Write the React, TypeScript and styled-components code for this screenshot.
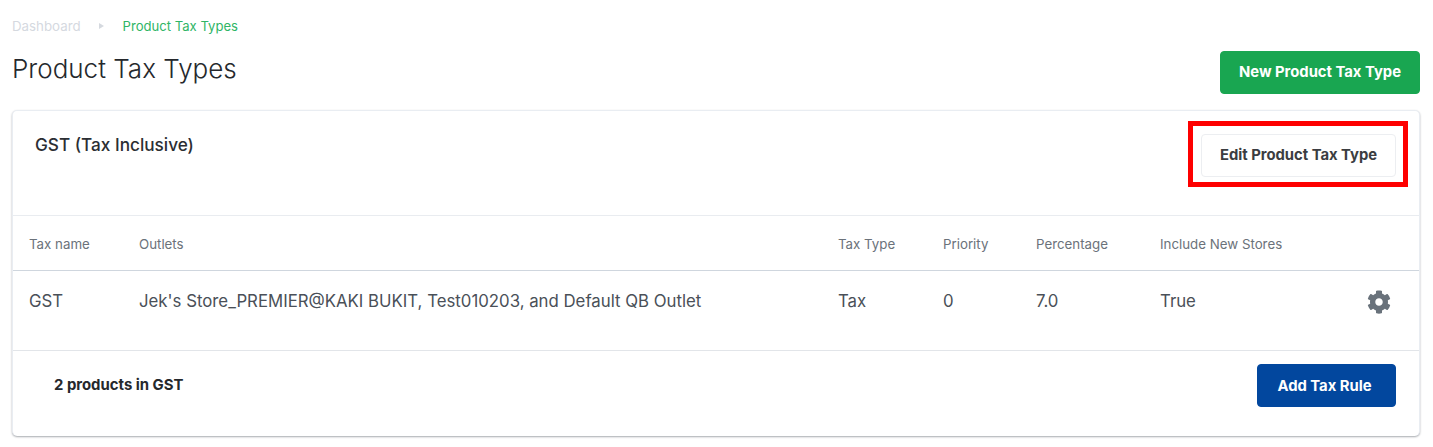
import styled, { createGlobalStyle } from 'styled-components';
import { FaCog } from 'react-icons/fa';

const GlobalStyle = createGlobalStyle`
    html, body {
        margin: 0;
        background-color: #ffffff;
        font-family: Inter, "Liberation Sans", sans-serif;
    }
`;

const Page = styled.div`
    width: 1433px;
    height: 447px;
    box-sizing: border-box;
    padding: 18px 13px 0 12px;
    overflow: hidden;
`;

const Breadcrumbs = styled.div`
    display: flex;
    align-items: center;
    height: 16px;
    font-size: 13.3px;
    line-height: 16px;
`;

const Crumb = styled.span<{ $active?: boolean }>`
    color: ${(p) => (p.$active ? '#2fb566' : '#d5d9df')};
    font-size: ${(p) => (p.$active ? '13.1px' : 'inherit')};
`;

const Arrow = styled.span`
    width: 0;
    height: 0;
    margin: 0 19px 0 18px;
    border-left: 5px solid #d5d9df;
    border-top: 3px solid transparent;
    border-bottom: 3px solid transparent;
`;

const TitleRow = styled.div`
    display: flex;
    justify-content: space-between;
    align-items: flex-start;
    margin-top: 17px;
    height: 59px;
`;

const Title = styled.h1`
    margin: 0;
    font-size: 26px;
    line-height: 36px;
    font-weight: 300;
    color: #25282c;
`;

const Button = styled.button<{ $bg: string; $color: string; $border: string; $w: number }>`
    width: ${(p) => p.$w}px;
    height: 43px;
    padding: 0 0 2px;
    box-sizing: border-box;
    background-color: ${(p) => p.$bg};
    color: ${(p) => p.$color};
    border: 1px solid ${(p) => p.$border};
    border-radius: 4px;
    font-family: inherit;
    font-size: 14.8px;
    font-weight: 700;
`;

const AddRuleButton = styled(Button)`
    padding: 0 4px 0 0;
`;

const Card = styled.div`
    border: 1px solid #e9edf2;
    border-bottom: none;
    border-radius: 5px;
    box-shadow: 0 1px 2px rgba(60, 66, 75, 0.45);
    background-color: #ffffff;
`;

const CardHeader = styled.div`
    display: flex;
    justify-content: space-between;
    align-items: flex-start;
    height: 105px;
    box-sizing: border-box;
    padding: 23px 23px 0 22px;
    border-bottom: 1px solid #e9ecf0;
`;

const CardTitle = styled.h2`
    margin: 0;
    font-size: 17.2px;
    line-height: 21px;
    font-weight: 500;
    color: #2b2e33;
`;

const Highlighted = styled.div`
    position: relative;
`;

const RedFrame = styled.div`
    position: absolute;
    left: -13px;
    top: -13px;
    width: 220px;
    height: 66px;
    box-sizing: border-box;
    border: 5px solid #fe0000;
`;

const Row = styled.div<{ $head?: boolean }>`
    display: grid;
    grid-template-columns: 110px 699px 105px 93px 124px 1fr 51px;
    align-items: ${(p) => (p.$head ? 'center' : 'start')};
    height: ${(p) => (p.$head ? 55 : 80)}px;
    box-sizing: border-box;
    padding: ${(p) => (p.$head ? '1px' : '18px')} 0 0 16px;
    font-size: ${(p) => (p.$head ? 13.3 : 16.8)}px;
    line-height: 24px;
    color: ${(p) => (p.$head ? '#6b727a' : '#4a5058')};
    border-bottom: 1px solid ${(p) => (p.$head ? '#cfd6de' : '#e2e5e9')};
`;

const GearCell = styled.div`
    display: flex;
    align-items: center;
    height: 24px;
    margin: 1px 0 0 -1px;
    color: #69727b;
    font-size: 24px;
`;

const CardFooter = styled.div`
    display: flex;
    justify-content: space-between;
    align-items: flex-start;
    height: 85px;
    box-sizing: border-box;
    padding: 13px 23px 0 41px;
`;

const ProductCount = styled.span`
    margin-top: 13px;
    font-size: 14.9px;
    line-height: 17px;
    font-weight: 700;
    color: #25282c;
`;

const columns = ['Tax name', 'Outlets', 'Tax Type', 'Priority', 'Percentage', 'Include New Stores'];
const values = ['GST', "Jek's Store_PREMIER@KAKI BUKIT, Test010203, and Default QB Outlet", 'Tax', '0', '7.0', 'True'];

export default function App() {
    return (
        <Page>
            <GlobalStyle />
            <Breadcrumbs>
                <Crumb>Dashboard</Crumb>
                <Arrow />
                <Crumb $active>Product Tax Types</Crumb>
            </Breadcrumbs>
            <TitleRow>
                <Title>Product Tax Types</Title>
                <Button $bg="#19a651" $color="#ffffff" $border="#19a651" $w={200}>New Product Tax Type</Button>
            </TitleRow>
            <Card>
                <CardHeader>
                    <CardTitle>GST (Tax Inclusive)</CardTitle>
                    <Highlighted>
                        <Button $bg="#ffffff" $color="#3b3d41" $border="#eceef1" $w={195}>Edit Product Tax Type</Button>
                        <RedFrame />
                    </Highlighted>
                </CardHeader>
                <Row $head>
                    {columns.map((c) => <span key={c}>{c}</span>)}
                </Row>
                <Row>
                    {values.map((v) => <span key={v}>{v}</span>)}
                    <GearCell><FaCog /></GearCell>
                </Row>
                <CardFooter>
                    <ProductCount>2 products in GST</ProductCount>
                    <AddRuleButton $bg="#02479e" $color="#ffffff" $border="#02479e" $w={139}>Add Tax Rule</AddRuleButton>
                </CardFooter>
            </Card>
        </Page>
    );
}
